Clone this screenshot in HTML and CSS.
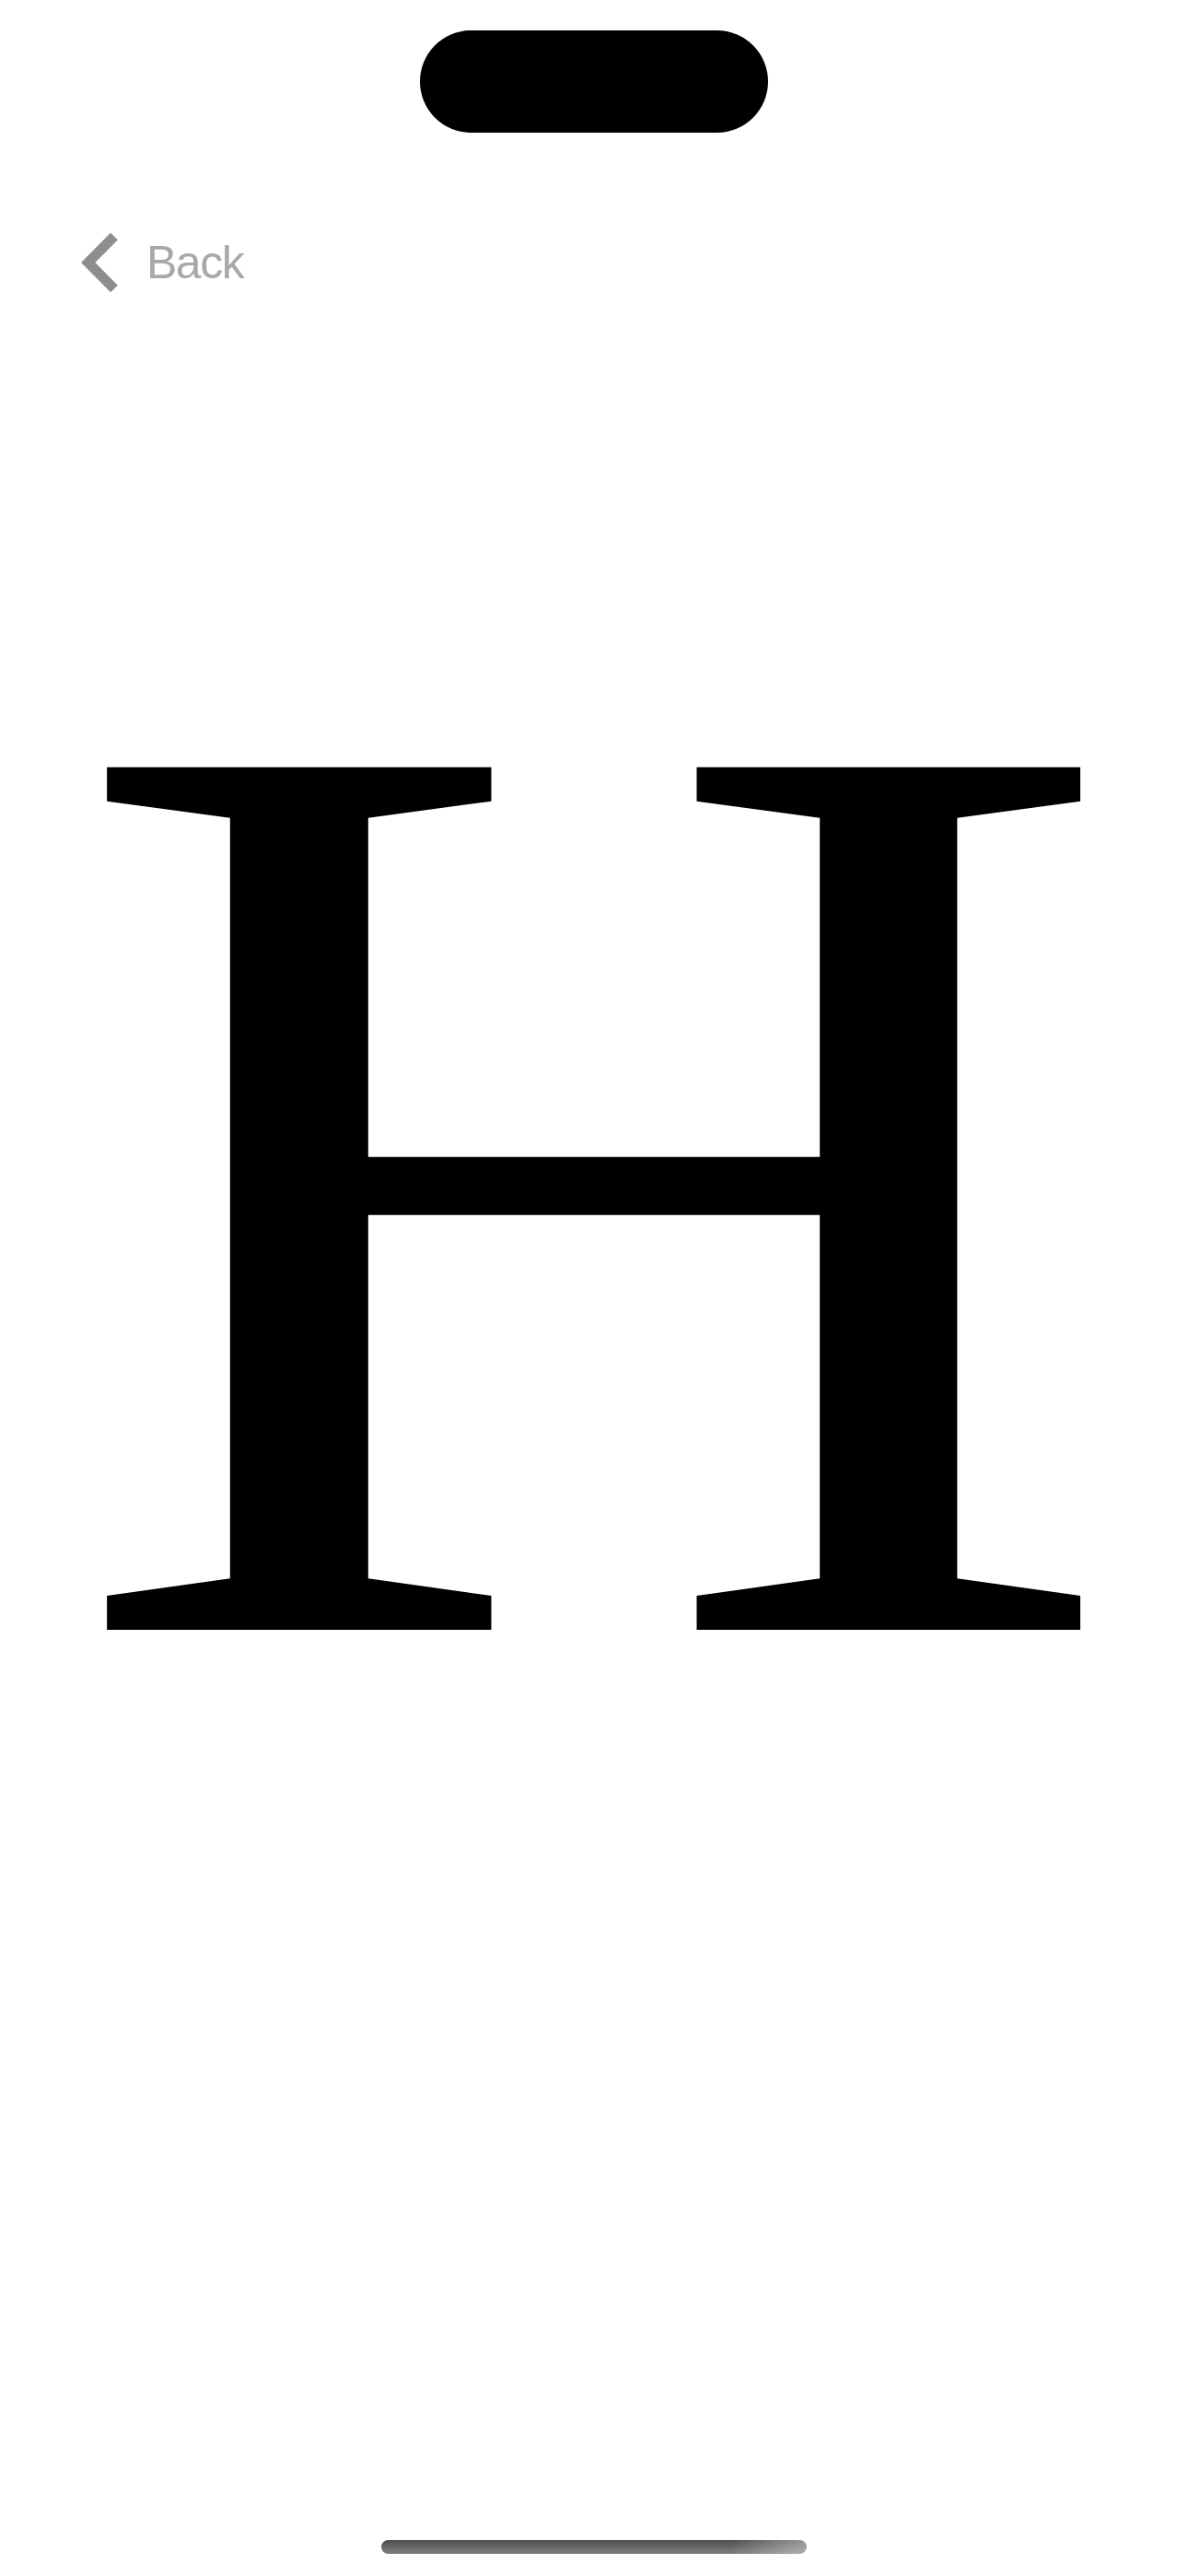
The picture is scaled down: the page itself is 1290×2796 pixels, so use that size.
FILE: index.html
```html
<!DOCTYPE html>
<html lang="en">
<head>
<meta charset="utf-8">
<title>H</title>
<link rel="stylesheet" href="styles.css">
</head>
<body>
<div class="screen">
  <div class="status">
    <div class="island"></div>
  </div>
  <div class="nav">
    <svg class="chevron" width="52" height="70" viewBox="0 0 52 70">
      <polyline points="44,6.5 15.8,35 44,63.5" fill="none" stroke="#8e8e8e" stroke-width="11" stroke-linejoin="miter" stroke-linecap="butt"/>
    </svg>
    <span class="back">Back</span>
  </div>
  <div class="glyph">H</div>
  <div class="home-bar"></div>
</div>
</body>
</html>
```
FILE: styles.css
```css
html, body {
  margin: 0;
  padding: 0;
  background: #ffffff;
}
.screen {
  width: 1290px;
  height: 2796px;
  display: flex;
  flex-direction: column;
  overflow: hidden;
  font-family: "Liberation Sans", Arial, sans-serif;
}
.status {
  display: flex;
  justify-content: center;
  padding-top: 33px;
}
.island {
  width: 378px;
  height: 111px;
  border-radius: 56px;
  background: #000000;
}
.nav {
  display: flex;
  align-items: center;
  height: 70px;
  margin-top: 106px;
  padding-left: 80px;
}
.chevron {
  display: block;
}
.back {
  margin-left: 27px;
  font-size: 50px;
  line-height: 1;
  letter-spacing: -1.5px;
  color: #a8a8a8;
}
.glyph {
  margin-top: 252px;
  font-family: "Liberation Serif", "Times New Roman", serif;
  font-size: 1430px;
  line-height: 1;
  color: #000000;
  text-align: center;
  transform: scaleX(1.113);
}
.home-bar {
  margin-top: auto;
  margin-bottom: 24px;
  align-self: center;
  width: 462px;
  height: 15px;
  border-radius: 8px;
  background:
    linear-gradient(to right, rgba(255,255,255,0) 82%, rgba(255,255,255,0.4) 100%),
    linear-gradient(to bottom, #4d4d4d, #7f7f7f);
}
```
